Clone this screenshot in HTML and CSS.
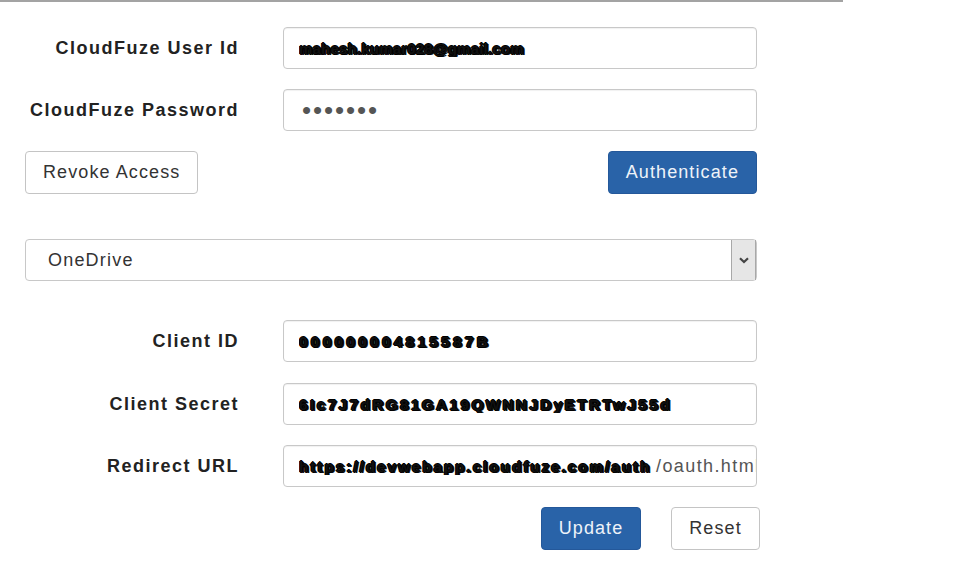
FILE: index.html
```html
<!DOCTYPE html>
<html>
<head>
<meta charset="utf-8">
<link rel="stylesheet" href="styles.css">
</head>
<body>
<div class="panel">
  <div class="form">
    <div class="row">
      <label class="label">CloudFuze User Id</label>
      <div class="input"><span class="redact r-user">mahesh.kumar028@gmail.com</span></div>
    </div>
    <div class="row">
      <label class="label">CloudFuze Password</label>
      <div class="input"><span class="dots">•••••••</span></div>
    </div>
    <div class="actions">
      <button class="btn">Revoke Access</button>
      <button class="btn primary">Authenticate</button>
    </div>
    <div class="select">
      <span class="select-text">OneDrive</span>
      <span class="select-arrow">
        <svg width="10" height="7" viewBox="0 0 10 7"><path d="M1 1.2 L5 5 L9 1.2" fill="none" stroke="#444" stroke-width="2.2"/></svg>
      </span>
    </div>
    <div class="client">
      <div class="row">
        <label class="label">Client ID</label>
        <div class="input"><span class="redact r-id">000000004815587B</span></div>
      </div>
      <div class="row">
        <label class="label">Client Secret</label>
        <div class="input"><span class="redact r-secret">6Ic7J7dRG81GA19QWNNJDyETRTwJ55d</span></div>
      </div>
      <div class="row">
        <label class="label">Redirect URL</label>
        <div class="input"><span class="redact r-url">https://devwebapp.cloudfuze.com/auth</span><span class="plain">/oauth.html</span></div>
      </div>
    </div>
    <div class="footer">
      <button class="btn primary">Update</button>
      <button class="btn">Reset</button>
    </div>
  </div>
</div>
</body>
</html>
```

FILE: styles.css
```css
html, body {
  margin: 0;
  padding: 0;
  background: #ffffff;
}
body {
  font-family: "Liberation Sans", Arial, sans-serif;
  color: #333;
}
.panel {
  width: 843px;
  border-top: 2px solid #a3a3a3;
}
.form {
  padding: 25px 0 0 25px;
  width: 732px;
}
.row {
  display: grid;
  grid-template-columns: 214px 474px;
  column-gap: 44px;
  align-items: center;
  margin-bottom: 20px;
}
.label {
  text-align: right;
  font-weight: bold;
  font-size: 18px;
  letter-spacing: 1.5px;
  color: #222;
  padding-top: 1px;
}
.input {
  height: 42px;
  box-sizing: border-box;
  border: 1px solid #c8c8c8;
  border-radius: 4px;
  box-shadow: inset 0 1px 1px rgba(0,0,0,0.06);
  display: flex;
  align-items: center;
  padding: 0 0 0 15px;
  overflow: hidden;
  white-space: nowrap;
}
.redact {
  font-size: 15px;
  font-weight: bold;
  color: #111;
  letter-spacing: 0.2px;
  text-shadow: 1px 0 0 #000, -1px 0 0 #000, 0 1px 0 #000, 0 -1px 0 #000, 2px 1px 0 #111;
  display: inline-block;
  overflow: hidden;
  flex-shrink: 0;
}
.r-user { width: 232px; }
.r-id { letter-spacing: 3.5px; width: 195px; }
.r-secret { letter-spacing: 2.6px; width: 378px; }
.r-url { letter-spacing: 2.1px; width: 357px; }
.plain {
  font-size: 18px;
  color: #555;
  letter-spacing: 1.4px;
  flex-shrink: 0;
}
.dots {
  font-size: 26px;
  color: #555;
  letter-spacing: 1.9px;
  padding-left: 3px;
  line-height: 1;
}
.actions {
  display: flex;
  justify-content: space-between;
  margin-bottom: 45px;
}
.btn {
  height: 43px;
  box-sizing: border-box;
  border: 1px solid #c4c4c4;
  border-radius: 4px;
  background: #fff;
  color: #333;
  font-family: "Liberation Sans", Arial, sans-serif;
  font-size: 18px;
  letter-spacing: 1.1px;
  padding: 0 17px;
  cursor: pointer;
}
.btn.primary {
  background: #2963a8;
  border-color: #24589a;
  color: #eef3f9;
}
.select {
  height: 42px;
  box-sizing: border-box;
  border: 1px solid #c8c8c8;
  border-radius: 4px;
  display: flex;
  align-items: stretch;
  margin-bottom: 39px;
}
.select-text {
  flex: 1;
  display: flex;
  align-items: center;
  padding-left: 22px;
  padding-top: 1px;
  font-size: 18px;
  letter-spacing: 1.2px;
  color: #333;
}
.select-arrow {
  width: 23px;
  background: #e6e6e6;
  border-left: 1px solid #a8a8a8;
  border-right: 1px solid #a8a8a8;
  display: flex;
  align-items: center;
  justify-content: center;
}
.client .row:nth-child(1) { margin-bottom: 21px; }
.footer {
  display: flex;
  justify-content: flex-end;
  gap: 30px;
  width: 735px;
}
.footer .btn.primary { width: 100px; padding: 0; }
.footer .btn:not(.primary) { width: 89px; padding: 0; }
```
